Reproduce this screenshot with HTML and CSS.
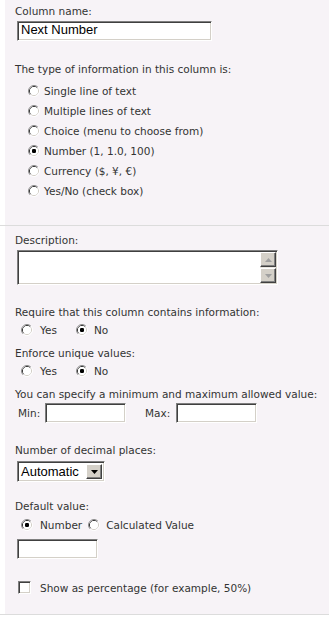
FILE: index.html
```html
<!DOCTYPE html>
<html>
<head>
<meta charset="utf-8">
<link rel="stylesheet" href="styles.css">
</head>
<body>
<section class="sec sec-top">
  <div class="inner inner-top">
    <div class="label l-colname">Column name:</div>
    <div class="field f-name">Next Number</div>
    <div class="label l-type">The type of information in this column is:</div>
    <div class="radios">
      <div class="row"><svg class="radio" viewBox="0 0 12 12"><path d="M2.11 9.89A5.5 5.5 0 0 1 9.89 2.11" stroke="#8c8c8c" fill="none"/><path d="M9.89 2.11A5.5 5.5 0 0 1 2.11 9.89" stroke="#fff" fill="none"/><path d="M2.82 9.18A4.5 4.5 0 0 1 9.18 2.82" stroke="#3a3a3a" fill="none"/><path d="M9.18 2.82A4.5 4.5 0 0 1 2.82 9.18" stroke="#d4d0c8" fill="none"/><circle cx="6" cy="6" r="4" fill="#fff"/></svg><span>Single line of text</span></div>
      <div class="row"><svg class="radio" viewBox="0 0 12 12"><path d="M2.11 9.89A5.5 5.5 0 0 1 9.89 2.11" stroke="#8c8c8c" fill="none"/><path d="M9.89 2.11A5.5 5.5 0 0 1 2.11 9.89" stroke="#fff" fill="none"/><path d="M2.82 9.18A4.5 4.5 0 0 1 9.18 2.82" stroke="#3a3a3a" fill="none"/><path d="M9.18 2.82A4.5 4.5 0 0 1 2.82 9.18" stroke="#d4d0c8" fill="none"/><circle cx="6" cy="6" r="4" fill="#fff"/></svg><span>Multiple lines of text</span></div>
      <div class="row"><svg class="radio" viewBox="0 0 12 12"><path d="M2.11 9.89A5.5 5.5 0 0 1 9.89 2.11" stroke="#8c8c8c" fill="none"/><path d="M9.89 2.11A5.5 5.5 0 0 1 2.11 9.89" stroke="#fff" fill="none"/><path d="M2.82 9.18A4.5 4.5 0 0 1 9.18 2.82" stroke="#3a3a3a" fill="none"/><path d="M9.18 2.82A4.5 4.5 0 0 1 2.82 9.18" stroke="#d4d0c8" fill="none"/><circle cx="6" cy="6" r="4" fill="#fff"/></svg><span>Choice (menu to choose from)</span></div>
      <div class="row"><svg class="radio" viewBox="0 0 12 12"><path d="M2.11 9.89A5.5 5.5 0 0 1 9.89 2.11" stroke="#8c8c8c" fill="none"/><path d="M9.89 2.11A5.5 5.5 0 0 1 2.11 9.89" stroke="#fff" fill="none"/><path d="M2.82 9.18A4.5 4.5 0 0 1 9.18 2.82" stroke="#3a3a3a" fill="none"/><path d="M9.18 2.82A4.5 4.5 0 0 1 2.82 9.18" stroke="#d4d0c8" fill="none"/><circle cx="6" cy="6" r="4" fill="#fff"/><rect x="4" y="4" width="4" height="4" rx="1.2" fill="#000"/></svg><span>Number (1, 1.0, 100)</span></div>
      <div class="row"><svg class="radio" viewBox="0 0 12 12"><path d="M2.11 9.89A5.5 5.5 0 0 1 9.89 2.11" stroke="#8c8c8c" fill="none"/><path d="M9.89 2.11A5.5 5.5 0 0 1 2.11 9.89" stroke="#fff" fill="none"/><path d="M2.82 9.18A4.5 4.5 0 0 1 9.18 2.82" stroke="#3a3a3a" fill="none"/><path d="M9.18 2.82A4.5 4.5 0 0 1 2.82 9.18" stroke="#d4d0c8" fill="none"/><circle cx="6" cy="6" r="4" fill="#fff"/></svg><span>Currency ($, ¥, €)</span></div>
      <div class="row"><svg class="radio" viewBox="0 0 12 12"><path d="M2.11 9.89A5.5 5.5 0 0 1 9.89 2.11" stroke="#8c8c8c" fill="none"/><path d="M9.89 2.11A5.5 5.5 0 0 1 2.11 9.89" stroke="#fff" fill="none"/><path d="M2.82 9.18A4.5 4.5 0 0 1 9.18 2.82" stroke="#3a3a3a" fill="none"/><path d="M9.18 2.82A4.5 4.5 0 0 1 2.82 9.18" stroke="#d4d0c8" fill="none"/><circle cx="6" cy="6" r="4" fill="#fff"/></svg><span>Yes/No (check box)</span></div>
    </div>
  </div>
</section>
<section class="sec sec-bottom">
  <div class="inner inner-bottom">
    <div class="label l-desc">Description:</div>
    <div class="textarea">
      <div class="ta-body"></div>
      <div class="ta-scroll">
        <div class="sb-btn"><svg viewBox="0 0 7 4" class="tri"><path d="M0 4L3.5 0L7 4Z" fill="#a0a0a0"/></svg></div>
        <div class="sb-track"></div>
        <div class="sb-btn"><svg viewBox="0 0 7 4" class="tri"><path d="M0 0L3.5 4L7 0Z" fill="#a0a0a0"/></svg></div>
      </div>
    </div>

    <div class="label l-req">Require that this column contains information:</div>
    <div class="yn">
      <svg class="radio" viewBox="0 0 12 12"><path d="M2.11 9.89A5.5 5.5 0 0 1 9.89 2.11" stroke="#8c8c8c" fill="none"/><path d="M9.89 2.11A5.5 5.5 0 0 1 2.11 9.89" stroke="#fff" fill="none"/><path d="M2.82 9.18A4.5 4.5 0 0 1 9.18 2.82" stroke="#3a3a3a" fill="none"/><path d="M9.18 2.82A4.5 4.5 0 0 1 2.82 9.18" stroke="#d4d0c8" fill="none"/><circle cx="6" cy="6" r="4" fill="#fff"/></svg><span class="yn-yes">Yes</span>
      <svg class="radio" viewBox="0 0 12 12"><path d="M2.11 9.89A5.5 5.5 0 0 1 9.89 2.11" stroke="#8c8c8c" fill="none"/><path d="M9.89 2.11A5.5 5.5 0 0 1 2.11 9.89" stroke="#fff" fill="none"/><path d="M2.82 9.18A4.5 4.5 0 0 1 9.18 2.82" stroke="#3a3a3a" fill="none"/><path d="M9.18 2.82A4.5 4.5 0 0 1 2.82 9.18" stroke="#d4d0c8" fill="none"/><circle cx="6" cy="6" r="4" fill="#fff"/><rect x="4" y="4" width="4" height="4" rx="1.2" fill="#000"/></svg><span class="yn-no">No</span>
    </div>

    <div class="label l-uniq">Enforce unique values:</div>
    <div class="yn">
      <svg class="radio" viewBox="0 0 12 12"><path d="M2.11 9.89A5.5 5.5 0 0 1 9.89 2.11" stroke="#8c8c8c" fill="none"/><path d="M9.89 2.11A5.5 5.5 0 0 1 2.11 9.89" stroke="#fff" fill="none"/><path d="M2.82 9.18A4.5 4.5 0 0 1 9.18 2.82" stroke="#3a3a3a" fill="none"/><path d="M9.18 2.82A4.5 4.5 0 0 1 2.82 9.18" stroke="#d4d0c8" fill="none"/><circle cx="6" cy="6" r="4" fill="#fff"/></svg><span class="yn-yes">Yes</span>
      <svg class="radio" viewBox="0 0 12 12"><path d="M2.11 9.89A5.5 5.5 0 0 1 9.89 2.11" stroke="#8c8c8c" fill="none"/><path d="M9.89 2.11A5.5 5.5 0 0 1 2.11 9.89" stroke="#fff" fill="none"/><path d="M2.82 9.18A4.5 4.5 0 0 1 9.18 2.82" stroke="#3a3a3a" fill="none"/><path d="M9.18 2.82A4.5 4.5 0 0 1 2.82 9.18" stroke="#d4d0c8" fill="none"/><circle cx="6" cy="6" r="4" fill="#fff"/><rect x="4" y="4" width="4" height="4" rx="1.2" fill="#000"/></svg><span class="yn-no">No</span>
    </div>

    <div class="label l-spec">You can specify a minimum and maximum allowed value:</div>
    <div class="minmax">
      <span class="mm-min">Min:</span><div class="field f-min"></div>
      <span class="mm-max">Max:</span><div class="field f-max"></div>
    </div>

    <div class="label l-dec">Number of decimal places:</div>
    <div class="select">
      <span class="sel-text">Automatic</span>
      <div class="sel-btn"><svg viewBox="0 0 7 4" class="tri"><path d="M0 0L3.5 4L7 0Z" fill="#000"/></svg></div>
    </div>

    <div class="label l-def">Default value:</div>
    <div class="yn yn-def">
      <svg class="radio" viewBox="0 0 12 12"><path d="M2.11 9.89A5.5 5.5 0 0 1 9.89 2.11" stroke="#8c8c8c" fill="none"/><path d="M9.89 2.11A5.5 5.5 0 0 1 2.11 9.89" stroke="#fff" fill="none"/><path d="M2.82 9.18A4.5 4.5 0 0 1 9.18 2.82" stroke="#3a3a3a" fill="none"/><path d="M9.18 2.82A4.5 4.5 0 0 1 2.82 9.18" stroke="#d4d0c8" fill="none"/><circle cx="6" cy="6" r="4" fill="#fff"/><rect x="4" y="4" width="4" height="4" rx="1.2" fill="#000"/></svg><span class="def-num">Number</span>
      <svg class="radio" viewBox="0 0 12 12"><path d="M2.11 9.89A5.5 5.5 0 0 1 9.89 2.11" stroke="#8c8c8c" fill="none"/><path d="M9.89 2.11A5.5 5.5 0 0 1 2.11 9.89" stroke="#fff" fill="none"/><path d="M2.82 9.18A4.5 4.5 0 0 1 9.18 2.82" stroke="#3a3a3a" fill="none"/><path d="M9.18 2.82A4.5 4.5 0 0 1 2.82 9.18" stroke="#d4d0c8" fill="none"/><circle cx="6" cy="6" r="4" fill="#fff"/></svg><span class="def-calc">Calculated Value</span>
    </div>
    <div class="field f-def"></div>

    <div class="check-row">
      <div class="checkbox"></div><span>Show as percentage (for example, 50%)</span>
    </div>
  </div>
</section>
</body>
</html>
```

FILE: styles.css
```css
html, body {
  margin: 0;
  padding: 0;
  background: #fff;
}
body {
  width: 329px;
  height: 617px;
  overflow: hidden;
  font-family: "DejaVu Sans", Verdana, sans-serif;
  font-size: 10.5px;
  color: #333;
}
.sec {
  border-bottom: 1px solid #dcdcdc;
}
.inner {
  margin-left: 5px;
  background: #f7f3f7;
  padding-left: 10px;
}
.inner-top {
  height: 225px;
  box-sizing: border-box;
  padding-top: 4px;
}
.inner-bottom {
  height: 388px;
  box-sizing: border-box;
  padding-top: 7px;
}
.label {
  line-height: 14px;
  height: 14px;
  white-space: nowrap;
}
.field {
  box-sizing: border-box;
  background: #fff;
  border: 1px solid;
  border-color: #7f7f7f #fff #fff #7f7f7f;
  box-shadow: inset 1px 1px #404040, inset -1px -1px #d4d0c8;
  height: 20px;
  font-family: "Liberation Sans", Arial, sans-serif;
  font-size: 13px;
  color: #000;
  line-height: 16px;
  padding-left: 3px;
}
.f-name {
  width: 195px;
  margin: 3px 0 0 2px;
}
.l-type {
  margin-top: 21px;
}
.radios {
  margin-top: 5px;
  padding-left: 13px;
}
.row {
  height: 20px;
  display: flex;
  align-items: center;
}
.radio {
  width: 12px;
  height: 12px;
  flex: none;
}
.row span {
  margin-left: 4px;
}
.textarea {
  margin: 3px 0 0 2px;
  width: 261px;
  height: 35px;
  box-sizing: border-box;
  display: flex;
  background: #fff;
  border: 1px solid;
  border-color: #7f7f7f #fff #fff #7f7f7f;
  box-shadow: inset 1px 1px #404040, inset -1px -1px #d4d0c8;
  padding: 1px;
}
.ta-body {
  flex: 1;
}
.ta-scroll {
  width: 16px;
  display: flex;
  flex-direction: column;
  background: #ece9e3;
}
.sb-btn {
  height: 15px;
  box-sizing: border-box;
  background: #d4d0c8;
  border: 1px solid;
  border-color: #fff #404040 #404040 #fff;
  box-shadow: inset -1px -1px #808080;
  display: flex;
  align-items: center;
  justify-content: center;
}
.sb-track {
  flex: 1;
}
.tri {
  width: 7px;
  height: 4px;
}
.l-req {
  margin-top: 20px;
}
.yn {
  display: flex;
  align-items: center;
  height: 18px;
  margin-top: 2px;
  padding-left: 6px;
}
.yn-yes {
  margin-left: 7px;
  width: 36px;
}
.yn-no {
  margin-left: 6px;
}
.l-uniq {
  margin-top: 7px;
}
.l-spec {
  margin-top: 7px;
}
.minmax {
  display: flex;
  align-items: center;
  margin-top: 2px;
  padding-left: 3px;
}
.mm-min {
  width: 27px;
}
.mm-max {
  margin-left: 19px;
  width: 31px;
}
.f-min, .f-max {
  width: 81px;
}
.l-dec {
  margin-top: 20px;
}
.select {
  margin: 4px 0 0 2px;
  width: 88px;
  height: 21px;
  box-sizing: border-box;
  display: flex;
  align-items: center;
  background: #fff;
  border: 1px solid;
  border-color: #7f7f7f #fff #fff #7f7f7f;
  box-shadow: inset 1px 1px #404040, inset -1px -1px #d4d0c8;
  padding: 2px;
}
.sel-text {
  flex: 1;
  font-family: "Liberation Sans", Arial, sans-serif;
  font-size: 13px;
  color: #000;
  padding-left: 1px;
}
.sel-btn {
  width: 16px;
  height: 15px;
  box-sizing: border-box;
  background: #d4d0c8;
  border: 1px solid;
  border-color: #fff #404040 #404040 #fff;
  box-shadow: inset -1px -1px #808080;
  display: flex;
  align-items: center;
  justify-content: center;
}
.l-def {
  margin-top: 17px;
}
.yn-def {
  margin-top: 3px;
}
.def-num {
  margin-left: 7px;
  margin-right: 6px;
}
.def-calc {
  margin-left: 6px;
}
.f-def {
  width: 81px;
  margin: 5px 0 0 2px;
}
.check-row {
  display: flex;
  align-items: center;
  margin-top: 22px;
  padding-left: 3px;
}
.checkbox {
  width: 13px;
  height: 13px;
  box-sizing: border-box;
  background: #fff;
  border: 1px solid;
  border-color: #7f7f7f #fff #fff #7f7f7f;
  box-shadow: inset 1px 1px #404040, inset -1px -1px #d4d0c8;
}
.check-row span {
  margin-left: 9px;
}
```
